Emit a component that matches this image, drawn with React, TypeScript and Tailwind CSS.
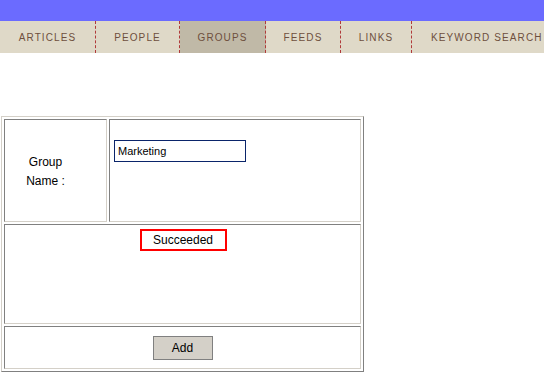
export default function App() {
  const tabs = [
    { label: 'ARTICLES', w: 'w-[96px] justify-center border-r' },
    { label: 'PEOPLE', w: 'w-[84px] justify-center border-r' },
    { label: 'GROUPS', w: 'w-[86px] justify-center border-r', active: true },
    { label: 'FEEDS', w: 'w-[75px] justify-center border-r' },
    { label: 'LINKS', w: 'w-[71px] justify-center border-r' },
    { label: 'KEYWORD SEARCH', w: 'flex-1 pl-[19px]' },
  ]

  const inset =
    'border border-t-[#808080] border-l-[#808080] border-b-[#d4d0c8] border-r-[#d4d0c8]'

  return (
    <div className="w-[544px] h-[380px] bg-white overflow-hidden font-['Liberation_Sans',Arial,sans-serif] text-black">
      <div className="h-[21px] bg-[#6b6bff]" />
      <nav className="flex h-[32px] bg-[#dfd9c8]">
        {tabs.map((t) => (
          <div
            key={t.label}
            className={`${t.w} shrink-0 flex items-center border-dashed border-r-[#b03a3a] text-[10px] tracking-[1.1px] text-[#6e4f3d] whitespace-nowrap ${
              t.active ? 'bg-[#c0b9a7]' : ''
            }`}
          >
            {t.label}
          </div>
        ))}
      </nav>

      <div className="ml-[1px] mt-[63px] w-[363px] border border-t-[#d4d0c8] border-l-[#d4d0c8] border-b-[#808080] border-r-[#808080] p-[2px] flex flex-col gap-[2px] text-[12px]">
        <div className="flex gap-[2px] h-[103px]">
          <div className={`${inset} w-[103px] flex flex-col items-center justify-center pr-[20px] pt-[2px] leading-[19px]`}>
            <span>Group</span>
            <span>Name :</span>
          </div>
          <div className={`${inset} flex-1 pl-[4px] pt-[20px]`}>
            <input
              defaultValue="Marketing"
              className="block w-[132px] h-[22px] border border-[#0a246a] px-[3px] text-[11px] text-black outline-none"
            />
          </div>
        </div>

        <div className={`${inset} h-[100px] flex justify-center pt-[4px] pl-[1px]`}>
          <div className="h-[22px] w-[87px] border-2 border-[#ff0000] flex items-center justify-center">
            Succeeded
          </div>
        </div>

        <div className={`${inset} h-[43px] flex items-center justify-center`}>
          <button className="w-[60px] h-[24px] bg-[#d4d0c8] border border-[#808080] text-[12px] text-black">
            Add
          </button>
        </div>
      </div>
    </div>
  )
}
